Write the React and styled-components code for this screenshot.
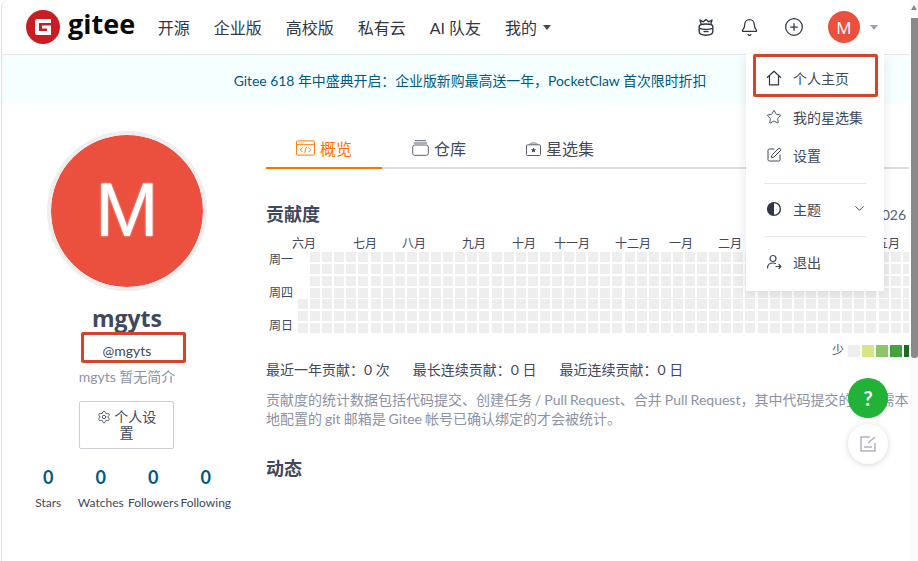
import styled, { createGlobalStyle } from "styled-components";
import { Bell, CirclePlus, Star, SquarePen, ChevronDown, Settings } from "lucide-react";

const NAV = ["开源", "企业版", "高校版", "私有云", "AI 队友"];
const MONTHS = [
  ["六月", 61],
  ["七月", 49],
  ["八月", 60],
  ["九月", 50],
  ["十月", 42],
  ["十一月", 61],
  ["十二月", 54],
  ["一月", 49],
  ["二月", 49],
  ["三月", 54],
  ["四月", 55],
  ["五月", 40],
];
const LEGEND = ["#eeeeee", "#d6e685", "#8cc665", "#44a340", "#1e6823"];
const STATS = ["Stars", "Watches", "Followers", "Following"];
const CELLS = Array.from({ length: 7 * 51 });

function App() {
  return (
    <Page>
      <GlobalStyle />
      <Header>
        <Logo>
          <svg width="34" height="34" viewBox="0 0 34 34">
            <circle cx="17" cy="17" r="17" fill="#c71d23" />
            <path d="M9 11.5a2.5 2.5 0 0 1 2.5-2.5H25v4H13v8h8v-2.6h-5v-3h9V25H11.5A2.5 2.5 0 0 1 9 22.5z" fill="#fff" />
          </svg>
          <LogoText>gitee</LogoText>
        </Logo>
        <Nav>
          {NAV.map((item) => (
            <NavItem key={item}>{item}</NavItem>
          ))}
          <NavItem>
            我的
            <Caret $color="#40485b" $left={6} />
          </NavItem>
        </Nav>
        <Tools>
          <svg width="20" height="20" viewBox="0 0 20 20" fill="none" stroke="#303643" strokeWidth="1.4" strokeLinejoin="round">
            <path d="M5.2 7 4 3l3.3 1.8L10 2.4l2.7 2.4L16 3l-1.2 4" />
            <path d="M3.2 9.4C3.2 7.8 5 7 10 7s6.8.8 6.8 2.4v5.2c0 2.4-2.4 3.6-6.8 3.6s-6.8-1.200-6.800-3.600z" />
            <path d="M3.400 11.400c3 1.300 10.200 1.300 13.200 0" />
            <path d="M7.500 14.500h5" />
          </svg>
          <Bell size={19} color="#303643" strokeWidth={1.6} />
          <CirclePlus size={20} color="#303643" strokeWidth={1.5} />
          <HeaderAvatar>M</HeaderAvatar>
          <Caret $color="#9aa0b0" $left={0} />
        </Tools>
      </Header>

      <Banner>Gitee 618 年中盛典开启：企业版新购最高送一年，PocketClaw 首次限时折扣</Banner>

      <Body>
        <Sidebar>
          <Avatar>M</Avatar>
          <Name>mgyts</Name>
          <Handle>@mgyts</Handle>
          <Bio>mgyts 暂无简介</Bio>
          <SettingsButton>
            <Settings size={14} strokeWidth={1.5} />
            {" "}个人设置
          </SettingsButton>
          <Stats>
            {STATS.map((label) => (
              <Stat key={label}>
                <StatValue>0</StatValue>
                <StatLabel>{label}</StatLabel>
              </Stat>
            ))}
          </Stats>
        </Sidebar>

        <Main>
          <Tabs>
            <Tab $active>
              <svg width="19" height="16" viewBox="0 0 20 16" fill="none" stroke="#fe7300" strokeWidth="1">
                <rect x="0.500" y="0.500" width="19" height="15" rx="1" />
                <path d="M0.500 4.500h19M3 2.500h.800M5 2.500h.800M7 2.500h.800" />
                <path d="m7 7.500-2.500 2.500L7 12.500m6-5 2.500 2.500-2.500 2.500M11 7l-2 6" />
              </svg>
              概览
            </Tab>
            <Tab>
              <svg width="17" height="16" viewBox="0 0 17 16" fill="none" stroke="#5a6072" strokeWidth="1">
                <path d="M3 .700h11M1.800 3h13.400" />
                <rect x="0.700" y="5" width="15.600" height="10.300" rx="2" />
              </svg>
              仓库
            </Tab>
            <Tab>
              <svg width="15" height="15" viewBox="0 0 15 15" fill="none">
                <path d="M3 3.500c0-1.500 2-2.500 4.500-2.500S12 2 12 3.500z" fill="#b4b7c0" />
                <rect x="0.500" y="3.800" width="14" height="10.700" rx="1" stroke="#5a6072" />
                <path d="m7.500 6.500.8 1.700 1.800.2-1.300 1.200.3 1.800-1.600-.9-1.600.9.300-1.800-1.300-1.200 1.800-.2z" fill="#40485b" />
              </svg>
              星选集
            </Tab>
          </Tabs>

          <HeadingRow>
            <Heading>贡献度</Heading>
            <Year>2026</Year>
          </HeadingRow>

          <Months>
            {MONTHS.map(([name, width]) => (
              <Month key={name} $width={width}>
                {name}
              </Month>
            ))}
          </Months>
          <Graph>
            <Weekdays>
              <span>周一</span>
              <span>周四</span>
              <span>周日</span>
            </Weekdays>
            <Cells>
              {CELLS.map((_, idx) => (
                <Cell key={idx} $empty={idx < 4} />
              ))}
            </Cells>
          </Graph>

          <Legend>
            <LegendLabel>少</LegendLabel>
            {LEGEND.map((color) => (
              <LegendCell key={color} $color={color} />
            ))}
          </Legend>

          <Summary>
            <span>最近一年贡献：0 次</span>
            <span>最长连续贡献：0 日</span>
            <span>最近连续贡献：0 日</span>
          </Summary>
          <Desc>
            贡献度的统计数据包括代码提交、创建任务 / Pull Request、合并 Pull Request，其中代码提交的次数需本地配置的 git 邮箱是 Gitee 帐号已确认绑定的才会被统计。
          </Desc>
          <ActivityHeading>动态</ActivityHeading>
        </Main>
      </Body>

      <Menu>
        <MenuItem>
          <svg width="16" height="16" viewBox="0 0 16 16" fill="none" stroke="#303643" strokeWidth="1.200" strokeLinejoin="round">
            <path d="M1 7.800 8 1.200l7 6.600M3.500 6v8.800h9V6" />
          </svg>
          个人主页
        </MenuItem>
        <MenuItem $spaced>
          <Star size={16} strokeWidth={1.4} />
          我的星选集
        </MenuItem>
        <MenuItem>
          <SquarePen size={16} strokeWidth={1.5} />
          设置
        </MenuItem>
        <MenuDivider $top={9} />
        <MenuItem>
          <svg width="16" height="16" viewBox="0 0 16 16">
            <circle cx="8" cy="8" r="6.400" fill="none" stroke="#303643" strokeWidth="1.400" />
            <path d="M8 1.600a6.400 6.400 0 0 0 0 12.800z" fill="#303643" />
          </svg>
          主题
          <MenuChevron>
            <ChevronDown size={15} strokeWidth={1.6} />
          </MenuChevron>
        </MenuItem>
        <MenuDivider $top={8} />
        <MenuItem>
          <svg width="16" height="16" viewBox="0 0 16 16" fill="none" stroke="#40485b" strokeWidth="1.200" strokeLinecap="round" strokeLinejoin="round">
            <circle cx="7" cy="4.500" r="3" />
            <path d="M1.500 14c0-3 2-5 5.500-5 1 0 1.800.2 2.500.5M10 12.500h5M13 10.500l2 2-2 2" />
          </svg>
          退出
        </MenuItem>
      </Menu>

      <RedBox $left={81} $top={332} $width={105} $height={31} />
      <RedBox $left={753} $top={54} $width={125} $height={43} />

      <HelpButton>?</HelpButton>
      <EditButton>
        <svg width="18" height="18" viewBox="0 0 18 18" fill="none" stroke="#aeb2c2" strokeWidth="1.500">
          <path d="M11 2H2v14h14V8" />
          <path d="M5 12h8M9 8l7-6" />
        </svg>
      </EditButton>

      <Scrollbar>
        <ScrollArrow />
        <ScrollThumb />
      </Scrollbar>
    </Page>
  );
}

export default App;

const GlobalStyle = createGlobalStyle`
  html, body {
    margin: 0;
    padding: 0;
    overflow: hidden;
    background: #ffffff;
  }

  * {
    box-sizing: border-box;
  }
`;

const Page = styled.div`
  position: relative;
  width: 917px;
  height: 561px;
  margin-left: 1px;
  border-left: 1px solid #dfdfdf;
  border-top-left-radius: 8px;
  overflow: hidden;
  font-family: Lato, "Noto Sans CJK SC", sans-serif;
  color: #40485b;
`;

const Header = styled.header`
  display: flex;
  align-items: center;
  height: 55px;
  padding-left: 24px;
  border-bottom: 1px solid #e6e8ec;
`;

const Logo = styled.div`
  display: flex;
  align-items: center;
  gap: 8px;
`;

const LogoText = styled.span`
  font-family: "Open Sans", sans-serif;
  font-size: 27px;
  font-weight: 700;
  line-height: 34px;
  color: #0a0a0a;
  margin-top: -6px;
`;

const Nav = styled.nav`
  display: flex;
  align-items: center;
  gap: 24px;
  margin-left: 22.5px;
`;

const NavItem = styled.span`
  display: flex;
  align-items: center;
  font-size: 16px;
  color: #303643;
`;

const Caret = styled.i`
  width: 0;
  height: 0;
  margin-left: ${(props) => props.$left}px;
  border-style: solid;
  border-width: 5px 4px 0;
  border-color: ${(props) => props.$color} transparent transparent;
`;

const Tools = styled.div`
  display: flex;
  align-items: center;
  margin-left: auto;
  margin-right: 40px;

  svg:nth-child(1) {
    margin-right: 24px;
  }

  svg:nth-child(2) {
    margin-right: 25px;
  }

  svg:nth-child(3) {
    margin-right: 24px;
  }
`;

const HeaderAvatar = styled.div`
  display: flex;
  align-items: center;
  justify-content: center;
  width: 32px;
  height: 32px;
  margin-right: 10px;
  border-radius: 50%;
  background: #eb4f3d;
  color: #ffffff;
  font-family: "Open Sans", sans-serif;
  font-size: 17px;
`;

const Banner = styled.div`
  display: flex;
  align-items: center;
  justify-content: center;
  height: 49px;
  padding-left: 20px;
  background: #f5ffff;
  color: #005980;
  font-size: 13.9px;
`;

const Body = styled.div`
  display: flex;
  padding-top: 26px;
`;

const Sidebar = styled.aside`
  display: flex;
  flex-direction: column;
  align-items: center;
  flex: none;
  width: 210px;
  margin-left: 20px;
`;

const Avatar = styled.div`
  display: flex;
  align-items: center;
  justify-content: center;
  width: 160px;
  height: 160px;
  margin-top: 1px;
  padding-bottom: 4px;
  border: 4px solid #eeeeee;
  border-radius: 50%;
  background: #eb4f3d;
  background-clip: padding-box;
  color: #ffffff;
  font-family: "Liberation Sans", sans-serif;
  font-size: 76px;
  text-shadow: 0 0 2px #ffffff;
`;

const Name = styled.h2`
  margin: 12px 0 0;
  font-family: "Open Sans", sans-serif;
  font-size: 23px;
  font-weight: 700;
  line-height: 30px;
  color: #40485b;
`;

const Handle = styled.div`
  margin-top: 8px;
  font-size: 14px;
  line-height: 20px;
  color: #40485b;
`;

const Bio = styled.div`
  margin-top: 6px;
  font-size: 14px;
  line-height: 20px;
  color: #8c92a4;
`;

const SettingsButton = styled.div`
  width: 95px;
  height: 48px;
  margin-top: 14px;
  margin-right: 1px;
  padding: 7px 10px;
  border: 1px solid #ccced4;
  border-radius: 2px;
  font-size: 14px;
  line-height: 16px;
  text-align: center;

  svg {
    vertical-align: -2px;
  }
`;

const Stats = styled.div`
  display: flex;
  width: 210px;
  margin-top: 16px;
`;

const Stat = styled.div`
  display: flex;
  flex-direction: column;
  align-items: center;
  flex: 1;
`;

const StatValue = styled.div`
  font-size: 18px;
  font-weight: 700;
  line-height: 24px;
  color: #005980;
`;

const StatLabel = styled.div`
  margin-top: 5px;
  font-size: 12px;
  line-height: 18px;
  white-space: nowrap;
`;

const Main = styled.main`
  flex: none;
  width: 643px;
  margin-left: 34px;
  overflow: hidden;
`;

const Tabs = styled.div`
  display: flex;
  height: 39px;
  border-bottom: 2px solid #dddddd;
`;

const Tab = styled.div`
  display: flex;
  align-items: center;
  gap: 5px;
  height: 39px;
  padding: 0 30px 1px;
  border-bottom: 2px solid ${(props) => (props.$active ? "#fe7300" : "transparent")};
  font-size: 16px;
  color: ${(props) => (props.$active ? "#fe7300" : "#40485b")};
`;

const HeadingRow = styled.div`
  display: flex;
  align-items: center;
  justify-content: space-between;
  height: 24px;
  margin-top: 33px;
`;

const Heading = styled.h3`
  margin: 0;
  font-size: 18px;
  font-weight: 700;
  line-height: 24px;
`;

const Year = styled.span`
  font-size: 14px;
  color: #5a6072;
  margin-right: 3px;
`;

const Months = styled.div`
  display: flex;
  height: 16px;
  margin-top: 10px;
  padding-left: 26px;
`;

const Month = styled.span`
  flex: none;
  width: ${(props) => props.$width}px;
  font-size: 12px;
  line-height: 16px;
  white-space: nowrap;
`;

const Graph = styled.div`
  display: flex;
`;

const Weekdays = styled.div`
  display: flex;
  flex-direction: column;
  flex: none;
  gap: 19px;
  width: 32px;
  padding-top: 1px;
  padding-left: 3px;
  font-size: 12px;
  line-height: 14px;
`;

const Cells = styled.div`
  display: grid;
  grid-auto-flow: column;
  grid-template-rows: repeat(7, 10px);
  grid-auto-columns: 10px;
  column-gap: 2.1px;
  row-gap: 1.85px;
`;

const Cell = styled.div`
  background: ${(props) => (props.$empty ? "transparent" : "#eeeeee")};
`;

const Legend = styled.div`
  display: flex;
  align-items: center;
  gap: 2px;
  width: 656px;
  height: 12px;
  margin-top: 12px;
  padding-left: 566px;
`;

const LegendLabel = styled.span`
  width: 14px;
  font-size: 12px;
  line-height: 12px;
`;

const LegendCell = styled.i`
  flex: none;
  width: 12px;
  height: 12px;
  background: ${(props) => props.$color};
`;

const Summary = styled.div`
  display: flex;
  gap: 23px;
  margin-top: 4px;
  font-size: 14px;
  line-height: 18px;
`;

const Desc = styled.p`
  margin: 11px 0 0;
  font-size: 14px;
  line-height: 19px;
  word-spacing: -0.6px;
  color: #8c92a4;
`;

const ActivityHeading = styled(Heading)`
  margin-top: 28px;
`;

const Menu = styled.div`
  position: absolute;
  top: 54px;
  left: 744px;
  width: 138px;
  height: 237px;
  padding: 5px 18px 9px;
  background: #ffffff;
  box-shadow: 0 2px 12px rgba(0, 0, 0, 0.1);
`;

const MenuItem = styled.div`
  position: relative;
  display: flex;
  align-items: center;
  gap: 11px;
  height: 38px;
  margin-top: ${(props) => (props.$spaced ? "1px" : "0")};
  padding-left: 2px;
  padding-bottom: 1px;
  font-size: 14px;
  color: #40485b;

  svg {
    flex: none;
  }
`;

const MenuChevron = styled.span`
  display: flex;
  margin-left: auto;
  margin-right: -1px;
`;

const MenuDivider = styled.div`
  height: 1px;
  margin: ${(props) => props.$top}px 0 6px;
  background: #e6e8ec;
`;

const RedBox = styled.div`
  position: absolute;
  left: ${(props) => props.$left - 2}px;
  top: ${(props) => props.$top}px;
  width: ${(props) => props.$width}px;
  height: ${(props) => props.$height}px;
  border: 3px solid #d3452b;
  border-radius: 2px;
`;

const FloatButton = styled.div`
  position: absolute;
  left: 846px;
  display: flex;
  align-items: center;
  justify-content: center;
  width: 40px;
  height: 40px;
  border-radius: 50%;
`;

const HelpButton = styled(FloatButton)`
  top: 378px;
  background: #22b237;
  color: #ffffff;
  font-size: 20px;
  font-weight: 700;
`;

const EditButton = styled(FloatButton)`
  top: 424px;
  background: #ffffff;
  box-shadow: 0 1px 6px rgba(0, 0, 0, 0.16);
`;

const Scrollbar = styled.div`
  position: absolute;
  top: 0;
  right: 0;
  bottom: 0;
  width: 8px;
  background: #fafafa;
`;

const ScrollArrow = styled.div`
  width: 0;
  height: 0;
  margin: 5px auto 8px;
  border-style: solid;
  border-width: 0 3px 5px;
  border-color: transparent transparent #8a8a8a;
`;

const ScrollThumb = styled.div`
  width: 7px;
  height: 340px;
  margin-left: 1px;
  border-radius: 0 0 3px 3px;
  background: #8a8a8a;
`;
